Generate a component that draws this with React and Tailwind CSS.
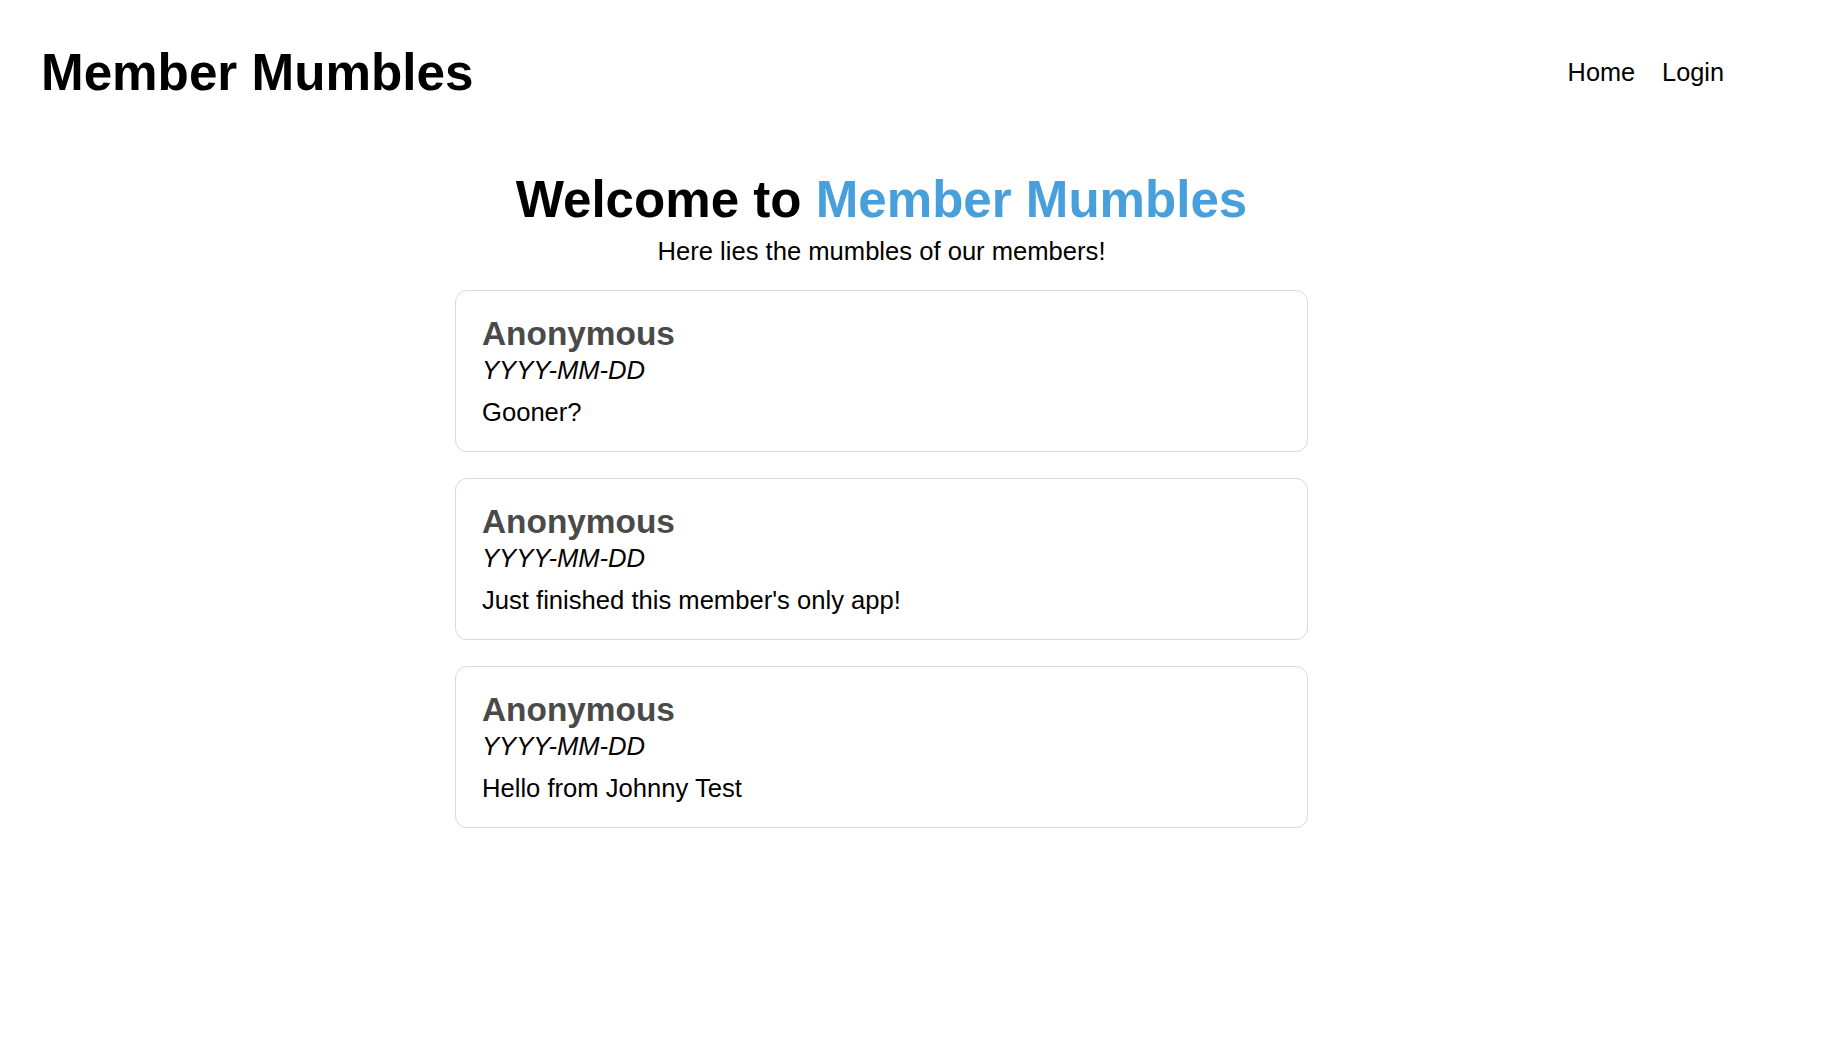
const posts = [
  { id: 1, author: 'Anonymous', date: 'YYYY-MM-DD', text: 'Gooner?' },
  { id: 2, author: 'Anonymous', date: 'YYYY-MM-DD', text: "Just finished this member's only app!" },
  { id: 3, author: 'Anonymous', date: 'YYYY-MM-DD', text: 'Hello from Johnny Test' },
];

const PostCard = ({ post }) => {
  return (
    <div className="rounded-[12px] border border-[#d9d9d9] bg-white px-[26px] pt-[23px] pb-[23px]">
      <h3 className="text-[33.4px] font-bold leading-[40px] text-[#4a4a4a]">{post.author}</h3>
      <p className="text-[25.6px] italic leading-[32px] text-black">{post.date}</p>
      <p className="mt-[10px] text-[25.6px] leading-[32px] text-black">{post.text}</p>
    </div>
  );
};

export default function App() {
  return (
    <div className="min-h-screen bg-white font-['Liberation_Sans',Arial,sans-serif] text-black">
      <div className="w-[1763px]">
        <header className="flex h-[146px] items-center justify-between pl-[41px] pr-[39px]">
          <h1 className="text-[51.2px] font-bold leading-none">Member Mumbles</h1>
          <nav className="flex items-center gap-[27px] text-[25.3px]">
            <a href="#" className="text-black">Home</a>
            <a href="#" className="text-black">Login</a>
          </nav>
        </header>

        <main className="mx-auto w-[853px] pt-[24px]">
          <h2 className="text-center text-[51.1px] font-bold leading-[59px]">
            Welcome to <span className="text-[#479fdb]">Member Mumbles</span>
          </h2>
          <p className="mt-[7px] text-center text-[25.6px] leading-[30px]">Here lies the mumbles of our members!</p>

          <div className="mt-[24px] flex flex-col gap-[26px]">
            {posts.map((post) => (
              <PostCard key={post.id} post={post} />
            ))}
          </div>
        </main>
      </div>
    </div>
  );
}
